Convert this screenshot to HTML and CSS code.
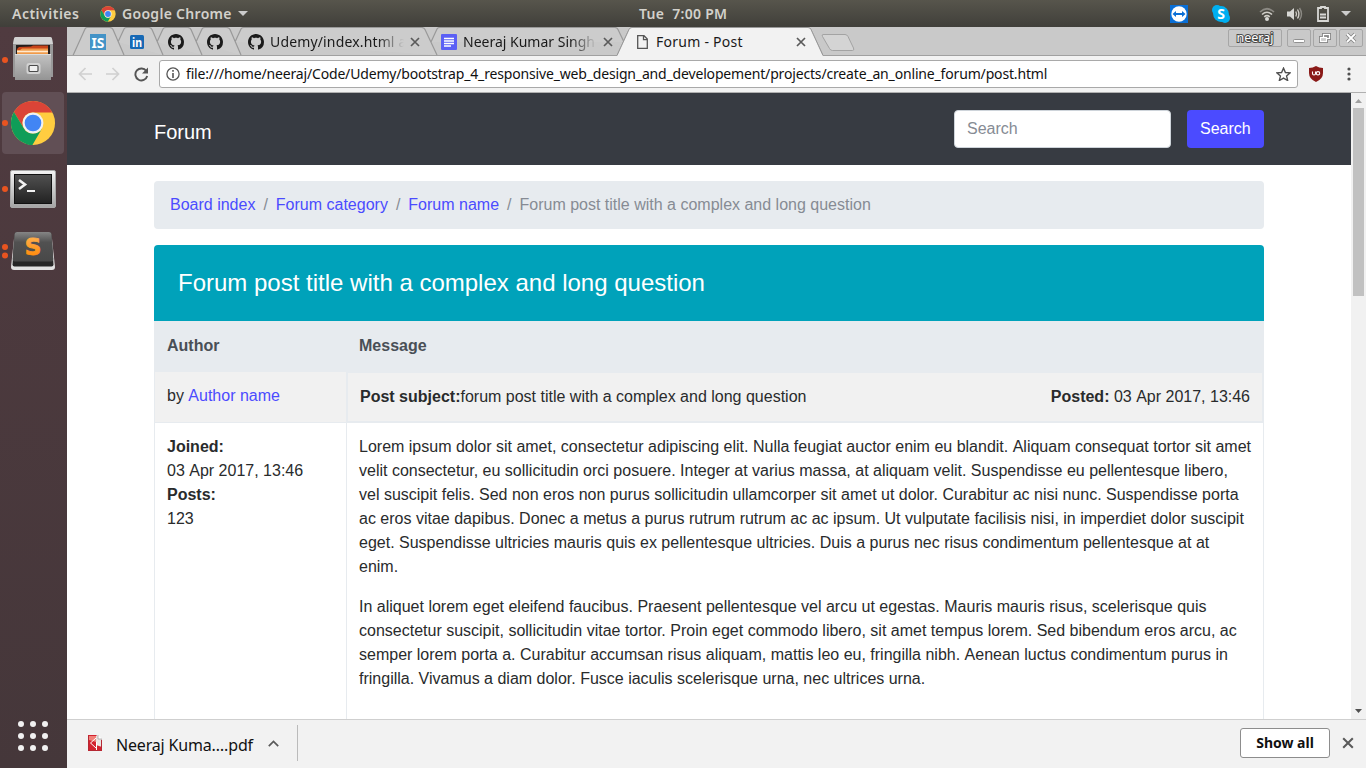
FILE: index.html
```html
<!DOCTYPE html>
<html lang="en">
<head>
<meta charset="utf-8">
<title>Forum - Post</title>
<link rel="stylesheet" href="styles.css">
</head>
<body>
<svg width="0" height="0" class="defs" aria-hidden="true">
  <defs>
    <linearGradient id="steel" x1="0" y1="0" x2="0" y2="1"><stop offset="0" stop-color="#c2c2c2"/><stop offset="1" stop-color="#949494"/></linearGradient>
    <linearGradient id="frame" x1="0" y1="0" x2="0" y2="1"><stop offset="0" stop-color="#f4f4f4"/><stop offset="1" stop-color="#a4a4a4"/></linearGradient>
    <linearGradient id="screen" x1="0" y1="0" x2="0" y2="1"><stop offset="0" stop-color="#505050"/><stop offset="1" stop-color="#222"/></linearGradient>
    <linearGradient id="key" x1="0" y1="0" x2="0" y2="1"><stop offset="0" stop-color="#858585"/><stop offset=".35" stop-color="#515151"/><stop offset="1" stop-color="#484848"/></linearGradient>
    <linearGradient id="orange" x1="0" y1="0" x2="0" y2="1"><stop offset="0" stop-color="#ffb558"/><stop offset="1" stop-color="#ff8500"/></linearGradient>
    <symbol id="chrome" viewBox="0 0 48 48">
      <circle cx="24" cy="24" r="23" fill="#ffcd40"/>
      <path d="M4 12.5A23 23 0 0 1 44.2 13H24a11 11 0 0 0-9.6 16.4z" fill="#db4437"/>
      <path d="M4.1 12.5A23 23 0 0 0 23.4 47L33.6 29.4A11 11 0 0 1 14.4 29.4z" fill="#0f9d58"/>
      <circle cx="24" cy="24" r="10.9" fill="#f1f1f1"/><circle cx="24" cy="24" r="8.7" fill="#4285f4"/>
    </symbol>
    <symbol id="github" viewBox="0 0 16 16">
      <path fill="#1b1b1b" d="M8 0C3.58 0 0 3.58 0 8c0 3.54 2.29 6.53 5.47 7.59.4.07.55-.17.55-.38 0-.19-.01-.82-.01-1.49-2.01.37-2.53-.49-2.69-.94-.09-.23-.48-.94-.82-1.13-.28-.15-.68-.52-.01-.53.63-.01 1.08.58 1.23.82.72 1.21 1.87.87 2.33.66.07-.52.28-.87.51-1.07-1.78-.2-3.64-.89-3.64-3.95 0-.87.31-1.59.82-2.15-.08-.2-.36-1.02.08-2.12 0 0 .67-.21 2.2.82.64-.18 1.32-.27 2-.27s1.36.09 2 .27c1.53-1.04 2.2-.82 2.2-.82.44 1.1.16 1.92.08 2.12.51.56.82 1.27.82 2.15 0 3.07-1.87 3.75-3.65 3.95.29.25.54.73.54 1.48 0 1.07-.01 1.93-.01 2.2 0 .21.15.46.55.38A8.01 8.01 0 0 0 16 8c0-4.42-3.58-8-8-8z"/>
    </symbol>
    <symbol id="cross" viewBox="0 0 10 10"><path d="M1 1l8 8M9 1L1 9" stroke="#5a5a5a" stroke-width="1.7" fill="none"/></symbol>
  </defs>
</svg>

<header class="topbar">
  <span class="activities">Activities</span>
  <svg class="app-icon" width="16" height="16"><use href="#chrome"/></svg>
  <span class="app-name">Google Chrome</span>
  <svg class="caret" width="10" height="5"><path d="M0 0h10L5 5z" fill="#ccc"/></svg>
  <span class="clock">Tue&nbsp; 7:00 PM</span>
  <div class="tray">
    <svg class="tv" width="18" height="18"><rect width="18" height="18" fill="#0a6fd6"/><circle cx="9" cy="9" r="7.7" fill="#fff"/><path d="M2.500 9L6 6v2h6V6l3.500 3-3.500 3v-2H6v2z" fill="#0a6fd6"/></svg>
    <svg class="skype" width="18" height="18"><circle cx="5" cy="5" r="5" fill="#00aff0"/><circle cx="13" cy="13" r="5" fill="#00aff0"/><circle cx="9" cy="9" r="7.9" fill="#00aff0"/><text x="9" y="13.500" text-anchor="middle" class="skype-s">S</text></svg>
    <svg class="wifi" width="16" height="14" fill="none"><path d="M1 5Q8-1.500 15 5" stroke="#8b8983" stroke-width="1.700"/><path d="M3 7.500Q8 3 13 7.500M5.200 9.800Q8 7.500 10.800 9.800" stroke="#d0cec8" stroke-width="1.600"/><circle cx="8" cy="12" r="2" fill="#d8d8d5"/></svg>
    <svg class="sound" width="16" height="14" fill="none"><path d="M0 4.500h3L7 1v12L3 9.500H0z" fill="#d8d8d5"/><path d="M8.800 4.500Q10.300 7 8.800 9.500M10.500 2.500Q13.300 7 10.500 11.500" stroke="#d0cec8" stroke-width="1.400"/><path d="M12.500 1Q16.500 7 12.500 13" stroke="#8b8983" stroke-width="1.400"/></svg>
    <svg class="battery" width="12" height="16" fill="none"><path d="M4 2V1h4v1h3v13H1V2z" stroke="#d8d8d5" stroke-width="1.800"/><path d="M3 8.500h6M3 11.500h6" stroke="#d8d8d5" stroke-width="2"/></svg>
    <svg class="caret2" width="10" height="5"><path d="M0 0h10L5 5z" fill="#ccc"/></svg>
  </div>
</header>

<div class="desktop">
  <aside class="dock">
    <div class="launcher files"><i class="dot"></i>
      <svg width="42" height="44" viewBox="0 0 42 44"><path d="M2 2q0-1 1-1h36q1 0 1 1l1 6v32H1V8z" fill="#999"/><path d="M2 1.500Q2 0 3.500 0h35Q40 0 40 1.500L41 7H1z" fill="#d2d2d2"/><path d="M4 8h34v11H4z" fill="#241d1c"/><path d="M5 18v-6l2-2 12-.500L21 8.500h15V18z" fill="#c8441a"/><path d="M5 18v-5h3l2-1.500h26V18z" fill="#f09a4a"/><path d="M5 13.700h31v1.600H5z" fill="#ffe9cf"/><path d="M3 17.500h36V43H3z" fill="url(#steel)"/><path d="M3 17.500h36" stroke="#ddd"/><rect x="14.500" y="26" width="14" height="11" rx="2.500" fill="#d2d2d2"/><rect x="17" y="28.500" width="9" height="6" rx="1" fill="#efefef" stroke="#4a4a4a" stroke-width="1.200"/></svg></div>
    <div class="launcher current"><i class="dot"></i><svg width="46" height="46"><use href="#chrome"/></svg></div>
    <div class="launcher terminal"><i class="dot"></i>
      <svg width="46" height="38"><rect x=".5" y=".5" width="45" height="37" rx="1.500" fill="url(#frame)" stroke="#a8a8a8"/><rect x="4" y="4" width="38" height="30" fill="#111"/><rect x="5" y="5" width="36" height="28" fill="url(#screen)"/><path d="M9 10l6 4.500L9 19" fill="none" stroke="#f2f2f2" stroke-width="2.600"/><path d="M17 21h8" stroke="#f2f2f2" stroke-width="2"/></svg></div>
    <div class="launcher sublime"><i class="dot pair"></i>
      <svg width="46" height="40"><path d="M4 8L1 36q0 3 3 3h38q3 0 3-3L42 8z" fill="#e2e2e2"/><path d="M4.500 3q.5-2 2.500-2h32q2 0 2.500 2l2 30.500q0 2-2 2h-37q-2 0-2-2z" fill="#262626"/><path d="M4.500 3q.5-2 2.500-2h32q2 0 2.500 2l1.800 25q0 2.500-2 2.500H4.700q-2 0-2-2.500z" fill="url(#key)"/><text x="23" y="23.500" text-anchor="middle" class="key-s">S</text></svg></div>
    <div class="apps"><i></i><i></i><i></i><i></i><i></i><i></i><i></i><i></i><i></i></div>
  </aside>

  <main class="browser">
    <div class="tabs">
      <svg class="tab-shapes" width="1299" height="29" fill="none">
        <path d="M6 28.500L18 2Q18.800 .5 20.500.5H42.500Q45 .5 46 2.500L57 28M51 15L57 2Q58 .5 60 .5H81.500Q84 .5 85 2.500L96 28M90 15L96 2Q97 .5 99 .5H120.500Q123 .5 124 2.500L135 28M129 15L135 2Q136 .5 138 .5H159.500Q162 .5 163 2.500L174 28M168 15L174 2Q175 .5 177 .5H354.500Q357 .5 358 2.500L370 28M364 15L370 2Q371 .5 373 .5H548Q550 .5 551 2.500L557 15" fill="#cfcfcf" fill-opacity=".6" stroke="#999" stroke-width="1.200"/>
        <path d="M0 28.500H550L562 2.500Q563 .5 565 .5H741Q743 .5 744 2.500L756 28.500H1299" stroke="#a0a0a0"/>
        <path d="M550 29L562 2.500Q563 .5 565 .5H741Q743 .5 744 2.500L756 29z" fill="#f2f2f2"/>
        <path d="M550 28.500L562 2.500Q563 .5 565 .5H741Q743 .5 744 2.500L756 28.500" stroke="#999"/>
        <path d="M756 7.500h22q2 0 3 2l5.500 11.500q1 2.500-1 2.500h-20q-2 0-3-2l-7-12q-1-2 .5-2z" fill="#d4d4d4" stroke="#a3a3a3"/>
      </svg>
      <span class="tab pin"><svg width="16" height="16"><rect width="16" height="16" fill="#4393c7"/><text x="1.500" y="13.500" class="is-mark" textLength="13" lengthAdjust="spacingAndGlyphs">IS</text></svg></span>
      <span class="tab pin"><svg width="14" height="14"><rect width="14" height="14" rx="1.500" fill="#1769b5"/><text x="2" y="11.500" class="in-mark" textLength="10" lengthAdjust="spacingAndGlyphs">in</text></svg></span>
      <span class="tab pin"><svg width="16" height="16"><use href="#github"/></svg></span>
      <span class="tab pin"><svg width="16" height="16"><use href="#github"/></svg></span>
      <span class="tab wide"><svg width="16" height="16"><use href="#github"/></svg><span class="tab-title fade udemy">Udemy/index.html a</span><svg width="10" height="10"><use href="#cross"/></svg></span>
      <span class="tab wide second"><svg width="16" height="16"><rect width="16" height="16" rx="1" fill="#5b60f5"/><path d="M3 4.500h10M3 7h10M3 9.500h10M3 12h7" stroke="#fff" stroke-width="1.300"/></svg><span class="tab-title fade neeraj">Neeraj Kumar Singh</span><svg width="10" height="10"><use href="#cross"/></svg></span>
      <span class="tab wide active"><svg width="11" height="14" fill="none"><path d="M.7.7H7L10.300 4v9.300H.7zM6.500.7v4h4" stroke="#555" stroke-width="1.300"/></svg><span class="tab-title post">Forum - Post</span><svg width="10" height="10"><use href="#cross"/></svg></span>
      <div class="window-controls">
        <span class="wc user">neeraj</span>
        <span class="wc"><svg width="22" height="16"><rect x="5.500" y="9.500" width="11" height="3" rx="1" fill="#fff" stroke="#909090"/></svg></span>
        <span class="wc"><svg width="22" height="16" fill="none"><g stroke="#858585" stroke-width="3"><rect x="9.500" y="4.500" width="6" height="4"/><rect x="6.500" y="7.500" width="6" height="4"/></g><g stroke="#fff" stroke-width="1.200"><rect x="9.500" y="4.500" width="6" height="4"/><rect x="6.500" y="7.500" width="6" height="4" fill="#ccc"/></g></svg></span>
        <span class="wc"><svg width="22" height="16" fill="none"><path d="M7 4l8 8M15 4l-8 8" stroke="#858585" stroke-width="3.600"/><path d="M7 4l8 8M15 4l-8 8" stroke="#fff" stroke-width="1.800"/></svg></span>
      </div>
    </div>

    <div class="toolbar">
      <svg class="nav-icon" width="14" height="14" fill="none" stroke="#d0d0d0" stroke-width="1.700"><path d="M14 7H1.500M7.500 1L1.500 7l6 6"/></svg>
      <svg class="nav-icon" width="14" height="14" fill="none" stroke="#d0d0d0" stroke-width="1.700"><path d="M0 7h12.500M6.500 1l6 6-6 6"/></svg>
      <svg class="nav-icon" width="15" height="15" fill="none"><path d="M12.300 4A6 6 0 1 0 13.200 9" stroke="#555" stroke-width="1.900"/><path d="M14 .5v6H8z" fill="#555"/></svg>
      <div class="omnibox">
        <svg width="14" height="14" fill="none"><circle cx="7" cy="7" r="6.100" stroke="#555" stroke-width="1.300"/><path d="M7 3v1.800M7 6v5" stroke="#555" stroke-width="1.600"/></svg>
        <span class="url">file:///home/neeraj/Code/Udemy/bootstrap_4_responsive_web_design_and_developement/projects/create_an_online_forum/post.html</span>
        <svg class="star" width="15" height="14" viewBox="1 .8 13 12.400" fill="none"><path d="M7.500 1.800l1.700 3.900 4.200.3-3.200 2.700 1 4.100-3.700-2.200-3.700 2.200 1-4.100L1.600 6l4.200-.3z" stroke="#4f4f4f" stroke-width="1.200"/></svg>
      </div>
      <svg class="shield" width="14" height="16"><path d="M7 0q3 2 7 2v5q0 6-7 9Q0 13 0 7V2q4 0 7-2z" fill="#8a1a18"/><path d="M3.500 5.500v2q0 1.500 1.500 1.500t1.500-1.500v-2" stroke="#fff" stroke-width="1.100" fill="none"/><circle cx="9" cy="7.300" r="1.700" stroke="#fff" stroke-width="1.100" fill="none"/></svg>
      <svg class="kebab" width="4" height="14" fill="#505050"><circle cx="2" cy="2" r="1.600"/><circle cx="2" cy="7" r="1.600"/><circle cx="2" cy="12" r="1.600"/></svg>
    </div>

    <div class="viewport">
      <div class="page">
        <nav class="navbar">
          <span class="brand">Forum</span>
          <div class="search-field">Search</div>
          <div class="search-button">Search</div>
        </nav>
        <div class="container">
          <div class="breadcrumb"><a>Board index</a><i>/</i><a>Forum category</a><i>/</i><a>Forum name</a><i>/</i><span>Forum post title with a complex and long question</span></div>
          <section class="thread">
            <h1>Forum post title with a complex and long question</h1>
            <div class="thread-head"><b>Author</b><b>Message</b></div>
            <div class="thread-meta">
              <div class="by">by <a class="word">Author name</a></div>
              <div class="subject"><span><b>Post subject:</b>forum post title with a complex and long question</span><span><b>Posted:</b> 03 <span class="word">Apr</span> 2017, 13:46</span></div>
            </div>
            <div class="thread-body">
              <div class="author"><b>Joined:</b><br>03 <span class="word">Apr</span> 2017, 13:46<br><b>Posts:</b><br>123</div>
              <div class="message">
                <p>Lorem ipsum dolor sit amet, consectetur adipiscing elit. Nulla feugiat auctor enim eu blandit. <span class="word">Aliquam</span> consequat tortor sit amet<br>velit consectetur, eu sollicitudin orci posuere. Integer at varius massa, at aliquam velit. Suspendisse eu pellentesque libero,<br>vel suscipit felis. Sed non eros non purus sollicitudin ullamcorper sit amet ut dolor. Curabitur ac nisi nunc. Suspendisse porta<br>ac eros vitae dapibus. Donec a metus a purus rutrum rutrum ac ac ipsum. Ut vulputate facilisis nisi, in imperdiet dolor suscipit<br>eget. Suspendisse ultricies mauris quis ex pellentesque ultricies. Duis a purus nec risus condimentum pellentesque at at<br>enim.</p>
                <p>In aliquet lorem eget eleifend faucibus. Praesent pellentesque vel arcu ut egestas. Mauris mauris risus, scelerisque quis<br>consectetur suscipit, sollicitudin vitae tortor. Proin eget commodo libero, sit amet tempus lorem. Sed bibendum eros arcu, ac<br>semper lorem porta a. Curabitur accumsan risus aliquam, mattis leo eu, fringilla nibh. <span class="word">Aenean</span> luctus condimentum purus in<br>fringilla. Vivamus a diam dolor. Fusce iaculis scelerisque urna, nec ultrices urna.</p>
              </div>
            </div>
          </section>
        </div>
      </div>
      <div class="scrollbar">
        <svg width="15" height="15"><path d="M4 10h7L7.500 6z" fill="#a0a0a0"/></svg>
        <div class="thumb"></div>
        <svg class="down" width="15" height="15"><path d="M4 5h7L7.500 9z" fill="#505050"/></svg>
      </div>
    </div>

    <footer class="downloads">
      <svg width="15" height="16"><path d="M0 0h8l6 5v11H0z" fill="#d3222f"/><path d="M1 1h7v6L1 5z" fill="#f08079"/><path d="M8 1h2l4 4v7l-6-2z" fill="#e9e4e2"/><path d="M10 0v4h4" fill="#fff" stroke="#999" stroke-width=".7"/><path d="M8 3L2.500 8 8 13M8.500 7v8" stroke="#fff" fill="none"/><path d="M.5.5v15h13V5" fill="none" stroke="#b52833"/></svg>
      <span class="file">Neeraj Kuma….pdf</span>
      <svg class="chevron" width="11" height="7" fill="none"><path d="M.8 6.200L5.500 1.500l4.700 4.700" stroke="#5a5a5a" stroke-width="1.700"/></svg>
      <span class="divider"></span>
      <span class="show-all">Show all</span>
      <svg class="close" width="12" height="12"><use href="#cross"/></svg>
    </footer>
  </main>
</div>
</body>
</html>
```

FILE: styles.css
```css
* { box-sizing: border-box; }
body { margin: 0; width: 1366px; height: 768px; overflow: hidden; font-family: "Noto Sans", sans-serif; display: flex; flex-direction: column; }
svg { display: block; flex: none; }
.defs { position: absolute; }

.topbar { height: 27px; flex: none; display: flex; align-items: center; padding-left: 12px; position: relative; background: linear-gradient(#57554c, #403f3a); color: #d3d1cb; font-size: 14px; font-weight: 600; white-space: nowrap; }
.activities { width: 68px; letter-spacing: .5px; }
.app-icon { margin-left: 20px; }
.app-name { width: 110px; margin-left: 6px; letter-spacing: .3px; }
.caret { margin-left: 6px; }
.clock { position: absolute; left: 639px; top: 4px; letter-spacing: .3px; }
.tray { margin-left: auto; display: flex; align-items: center; padding-right: 15px; }
.skype { margin-left: 24px; }
.skype-s { font: bold 14px "Noto Sans", sans-serif; fill: #fff; }
.wifi { margin-left: 29px; }
.sound { margin-left: 12px; }
.battery { margin-left: 14px; }
.caret2 { margin-left: 12px; }

.desktop { flex: 1; display: flex; min-height: 0; }
.dock { width: 67px; flex: none; background: linear-gradient(#503b40, #45373a); display: flex; flex-direction: column; padding: 2px 3px 0 2px; }
.launcher { width: 62px; height: 62px; margin-bottom: 2px; display: flex; align-items: center; justify-content: center; border-radius: 4px; position: relative; }
.launcher svg { overflow: visible; }
.current { background: #614f55; margin-bottom: 4px; }
.files { height: 61px; padding-bottom: 1px; }
.sublime { padding-bottom: 5px; }
.dot { position: absolute; left: 0; top: 28px; width: 6px; height: 6px; border-radius: 50%; background: #e95420; }
.pair { top: 22px; box-shadow: 0 8.500px #e95420; }
.key-s { font: bold 23px "DejaVu Sans", sans-serif; fill: url(#orange); stroke: url(#orange); stroke-width: .8; }
.apps { margin: auto 0 17px 16px; display: grid; grid-template-columns: repeat(3, 6px); gap: 6px; }
.apps i { width: 6px; height: 6px; border-radius: 50%; background: #f1f1f1; }

.browser { flex: 1; min-width: 0; display: flex; flex-direction: column; background: #f2f2f2; }
.tabs { height: 29px; flex: none; position: relative; display: flex; background: #c9c9c9; padding-left: 11px; }
.tab-shapes { position: absolute; left: 0; top: 0; }
.tab { position: relative; display: flex; align-items: center; height: 30px; }
.pin { width: 39px; justify-content: center; }
.wide { width: 193px; padding-left: 14px; font-size: 14px; color: #1a1a1a; }
.tab-title { margin-left: 6px; width: 134px; white-space: nowrap; line-height: 22px; }
.wide > svg:last-child { margin-left: 6px; }
.fade { -webkit-mask-image: linear-gradient(90deg, #000 80%, transparent); mask-image: linear-gradient(90deg, #000 80%, transparent); }
.udemy { letter-spacing: .15px; }
.tab-title.post { margin-left: 8px; letter-spacing: .25px; }
.active { padding-left: 17px; }
.is-mark { font: bold 14px "Noto Sans", sans-serif; fill: #fff; }
.in-mark { font: bold 12px "Noto Sans", sans-serif; fill: #fff; }
.window-controls { margin-left: auto; display: flex; gap: 2px; padding: 2px 3px 0 0; position: relative; }
.wc { width: 24px; height: 18px; border: 1px solid #a6a6a6; border-radius: 2px; }
.user { width: 54px; margin-right: 3px; text-align: center; font-size: 12.500px; line-height: 16px; color: #fff; -webkit-text-stroke: 2px #4a4a4a; paint-order: stroke fill; }

.toolbar { height: 37px; flex: none; border-bottom: 1px solid #b0b0b0; display: flex; align-items: center; padding-left: 11px; }
.nav-icon { margin-right: 14px; }
.nav-icon:nth-child(3) { margin-right: 10px; }
.omnibox { width: 1139px; height: 28px; background: #fff; border: 1px solid #a9a9a9; border-radius: 3px; display: flex; align-items: center; padding: 0 6px; }
.url { font-size: 14px; margin-left: 6px; margin-top: -2px; color: #111; white-space: nowrap; letter-spacing: -.165px; }
.star { margin-left: auto; }
.shield { margin-left: 11px; }
.kebab { margin-left: 24px; }

.viewport { height: 626px; flex: none; display: flex; overflow: hidden; background: #fff; }
.page { flex: 1; font: 16px/24px "Liberation Sans", sans-serif; color: #292b2c; }
.page a { color: #4b4bff; }
.word { display: inline-block; }
.navbar { height: 72px; background: #373b42; padding: 0 87px; display: flex; align-items: center; color: #fff; }
.brand { font-size: 20px; line-height: 30px; padding-top: 6px; }
.search-field { margin-left: auto; margin-right: 16px; width: 217px; height: 38px; border: 1px solid #ced4da; border-radius: 4px; background: #fff; padding: 6px 12px; color: #868b94; }
.search-button { width: 77px; height: 38px; border-radius: 4px; background: #4b4bff; padding: 7px 13px; }
.container { padding: 16px 87px 0; }
.breadcrumb { height: 48px; border-radius: 4px; background: #e7ebef; padding: 12px 16px; margin-bottom: 16px; color: #868b94; }
.breadcrumb i { font-style: normal; padding: 0 8px; }
.thread h1 { margin: 0; height: 76px; padding: 25px 24px; border-radius: 4px 4px 0 0; background: #00a2ba; color: #fff; font-size: 24px; line-height: 26px; font-weight: 400; }
.thread-head, .thread-meta, .thread-body { display: grid; grid-template-columns: 193px 1fr; }
.thread-head { height: 51px; background: #e7ebef; color: #494f56; padding: 13px 0 0 13px; grid-template-columns: 192px 1fr; }
.thread-meta { height: 51px; background: #f1f1f1; }
.by { border: solid #e7ebef; border-width: 0 1px 1px; padding: 12px; }
.subject { border: solid #e7ebef; border-width: 1px 2px 2px 1px; display: flex; justify-content: space-between; padding: 12px; }
.thread-body { height: 400px; border: solid #e7ebef; border-width: 0 1px; grid-template-columns: 192px 1fr; }
.author { border-right: 1px solid #e7ebef; padding: 12px; }
.message { padding: 12px; white-space: nowrap; }
.message p { margin: 0 0 16px; }
.scrollbar { width: 15px; flex: none; background: #f1f1f1; display: flex; flex-direction: column; }
.thumb { width: 11px; height: 188px; margin-left: 2px; background: #c1c1c1; }
.down { margin-top: auto; }

.downloads { flex: 1; border-top: 1px solid #cfcfcf; display: flex; align-items: center; padding: 0 12px 2px 21px; }
.file { margin-left: 13px; margin-top: 3px; width: 138px; font-size: 16px; white-space: nowrap; letter-spacing: -.17px; color: #111; }
.chevron { margin-left: 14px; }
.divider { width: 1px; height: 36px; margin-left: 18px; background: #bbb; }
.show-all { margin-left: auto; width: 90px; height: 30px; border: 1px solid #8d8d8d; border-radius: 3px; background: #fff; font-size: 14px; font-weight: 700; line-height: 27px; text-align: center; color: #111; }
.close { margin-left: 12px; }
```
